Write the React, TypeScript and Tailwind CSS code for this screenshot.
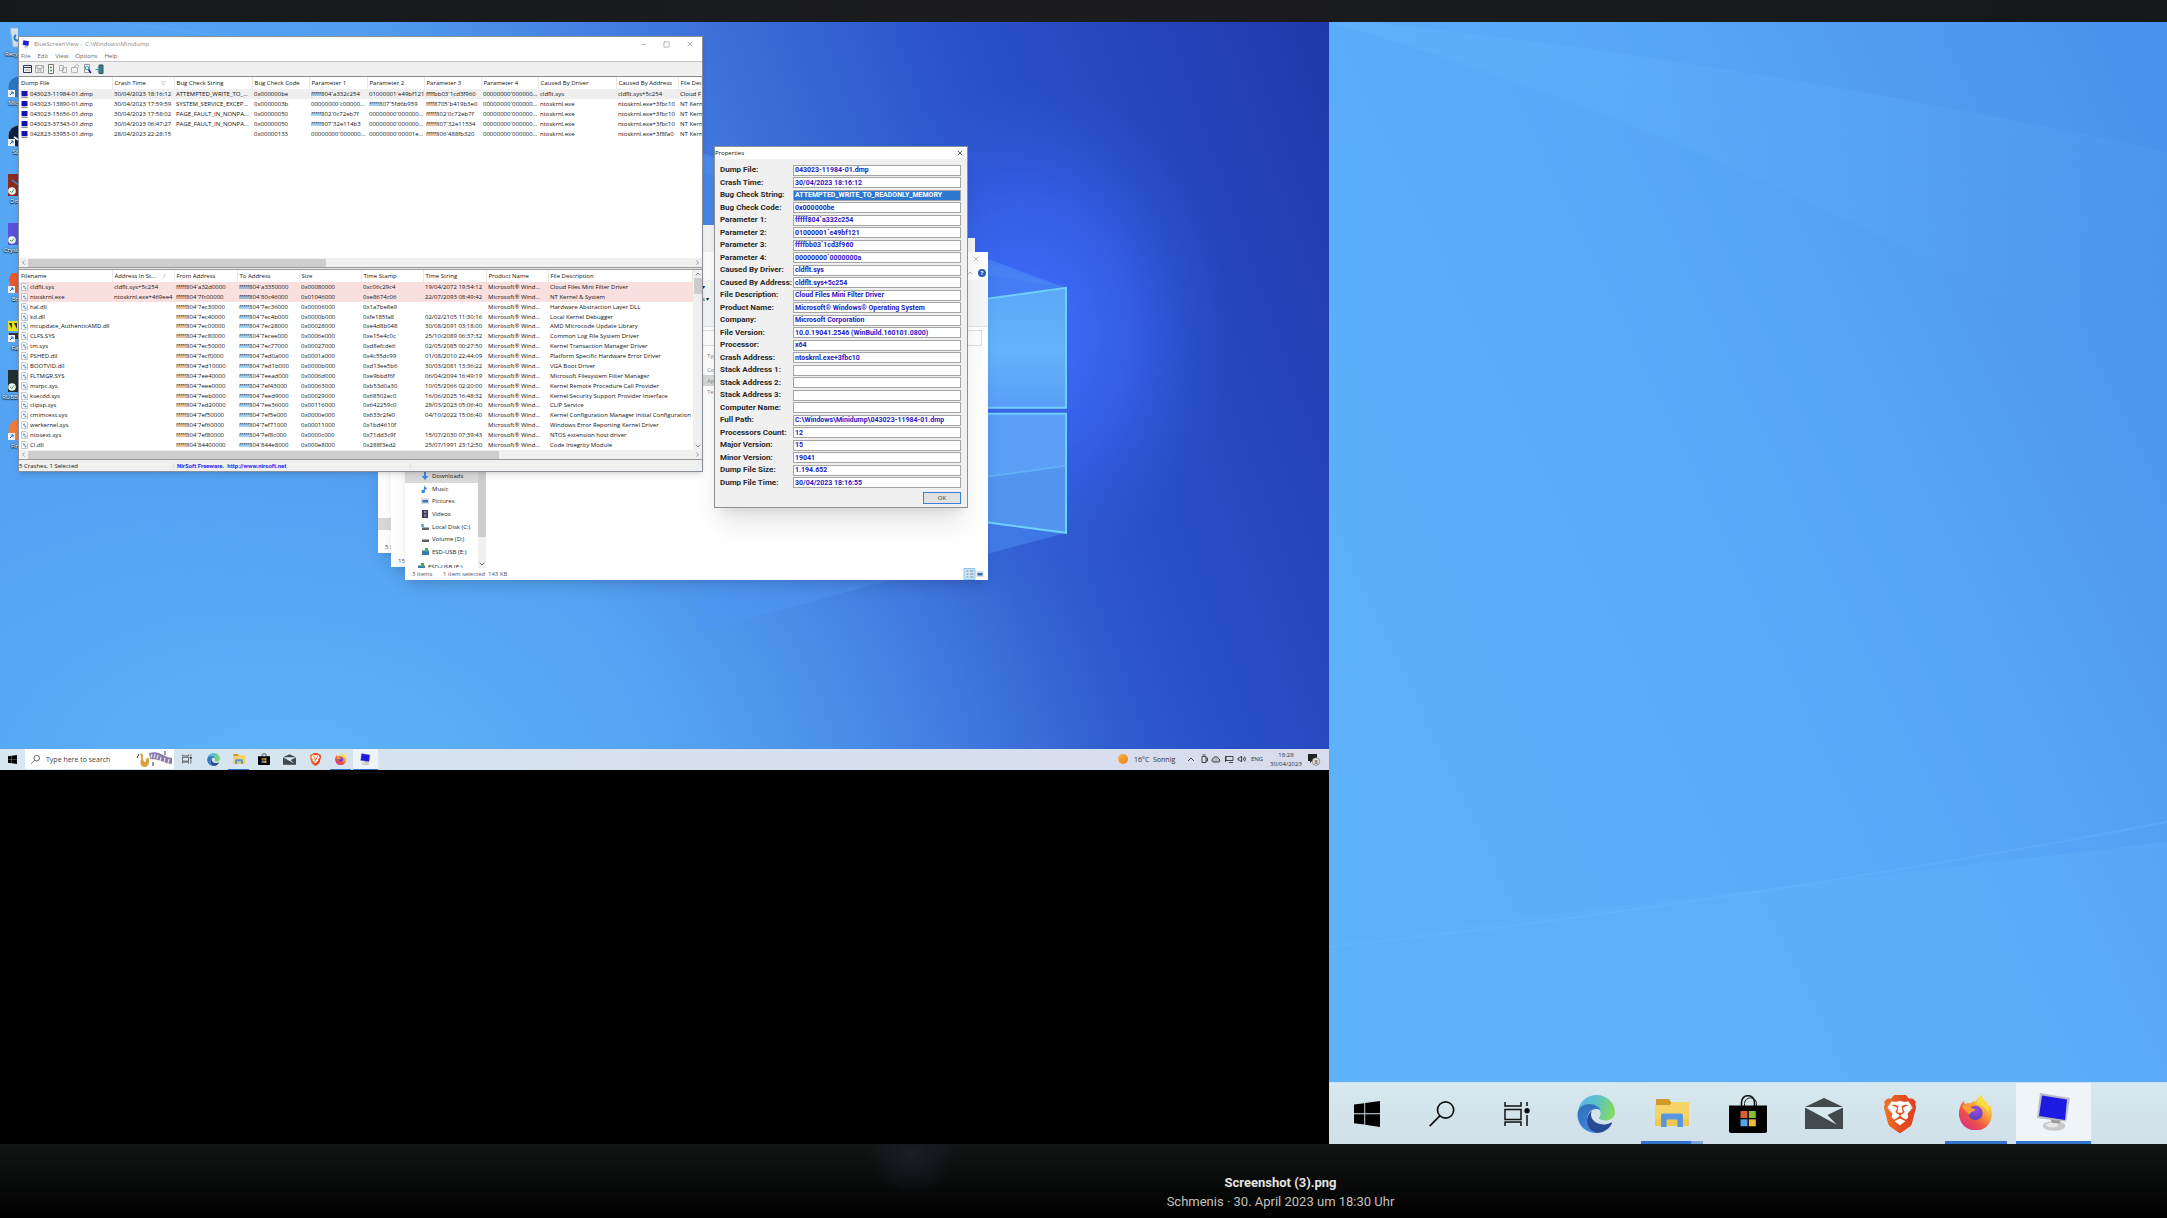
import { useId } from "react";
import { SiBrave } from "react-icons/si";
import { LuMinus, LuSquare, LuX, LuChevronUp, LuChevronDown } from "react-icons/lu";

interface IconProps {
  className?: string;
}

interface Column {
  label: string;
  width: string;
  sort?: string;
}

const CRASH_COLUMNS: Column[] = [
  { label: "Dump File", width: "w-[93px]" },
  { label: "Crash Time", width: "w-[62px]", sort: "▽" },
  { label: "Bug Check String", width: "w-[78px]" },
  { label: "Bug Check Code", width: "w-[57px]" },
  { label: "Parameter 1", width: "w-[58px]" },
  { label: "Parameter 2", width: "w-[57px]" },
  { label: "Parameter 3", width: "w-[57px]" },
  { label: "Parameter 4", width: "w-[57px]" },
  { label: "Caused By Driver", width: "w-[78px]" },
  { label: "Caused By Address", width: "w-[62px]" },
  { label: "File Des", width: "w-auto" },
];

const CRASHES = [
  ["043023-11984-01.dmp", "30/04/2023 18:16:12", "ATTEMPTED_WRITE_TO_...", "0x000000be", "fffff804`a332c254", "01000001`e49bf121", "ffffbb03`1cd3f960", "00000000`000000...", "cldflt.sys", "cldflt.sys+5c254", "Cloud F"],
  ["043023-13890-01.dmp", "30/04/2023 17:59:59", "SYSTEM_SERVICE_EXCEP...", "0x0000003b", "00000000`c00000...", "fffff807`5fd6b959", "ffff8705`b419b3e0", "00000000`000000...", "ntoskrnl.exe", "ntoskrnl.exe+3fbc10", "NT Kern"],
  ["043023-15656-01.dmp", "30/04/2023 17:58:02", "PAGE_FAULT_IN_NONPA...", "0x00000050", "fffff802`0c72eb7f", "00000000`000000...", "fffff802`0c72eb7f", "00000000`000000...", "ntoskrnl.exe", "ntoskrnl.exe+3fbc10", "NT Kern"],
  ["043023-37343-01.dmp", "30/04/2023 06:47:27", "PAGE_FAULT_IN_NONPA...", "0x00000050", "fffff807`32e114b3", "00000000`000000...", "fffff807`32e11534", "00000000`000000...", "ntoskrnl.exe", "ntoskrnl.exe+3fbc10", "NT Kern"],
  ["042823-33953-01.dmp", "28/04/2023 22:28:15", "", "0x00000133", "00000000`000000...", "00000000`00001e...", "fffff806`488fb320", "00000000`000000...", "ntoskrnl.exe", "ntoskrnl.exe+3f8fa0", "NT Kern"],
];

const DRIVER_COLUMNS: Column[] = [
  { label: "Filename", width: "w-[93px]" },
  { label: "Address In St...", width: "w-[62px]", sort: "∕" },
  { label: "From Address", width: "w-[63px]" },
  { label: "To Address", width: "w-[62px]" },
  { label: "Size", width: "w-[62px]" },
  { label: "Time Stamp", width: "w-[62px]" },
  { label: "Time String", width: "w-[63px]" },
  { label: "Product Name", width: "w-[62px]" },
  { label: "File Description", width: "w-auto" },
];

const WIND = "Microsoft® Wind...";

const DRIVERS = [
  ["cldflt.sys", "cldflt.sys+5c254", "fffff804`a32d0000", "fffff804`a3350000", "0x00080000", "0xc06c29c4", "19/04/2072 19:54:12", WIND, "Cloud Files Mini Filter Driver"],
  ["ntoskrnl.exe", "ntoskrnl.exe+469ee4", "fffff804`7fc00000", "fffff804`80c46000", "0x01046000", "0xe8674c06", "22/07/2093 08:49:42", WIND, "NT Kernel & System"],
  ["hal.dll", "", "fffff804`7ec30000", "fffff804`7ec36000", "0x00006000", "0x1a7be8e9", "", WIND, "Hardware Abstraction Layer DLL"],
  ["kd.dll", "", "fffff804`7ec40000", "fffff804`7ec4b000", "0x0000b000", "0xfe185fa8", "02/02/2105 11:30:16", WIND, "Local Kernel Debugger"],
  ["mcupdate_AuthenticAMD.dll", "", "fffff804`7ec00000", "fffff804`7ec28000", "0x00028000", "0xe4d8b048", "30/08/2091 03:18:00", WIND, "AMD Microcode Update Library"],
  ["CLFS.SYS", "", "fffff804`7ec80000", "fffff804`7ecee000", "0x0006e000", "0xe15e4c0c", "25/10/2089 06:37:32", WIND, "Common Log File System Driver"],
  ["tm.sys", "", "fffff804`7ec50000", "fffff804`7ec77000", "0x00027000", "0xd8efcde6", "02/05/2085 00:27:50", WIND, "Kernel Transaction Manager Driver"],
  ["PSHED.dll", "", "fffff804`7ecf0000", "fffff804`7ed0a000", "0x0001a000", "0x4c55dc99", "01/08/2010 22:44:09", WIND, "Platform Specific Hardware Error Driver"],
  ["BOOTVID.dll", "", "fffff804`7ed10000", "fffff804`7ed1b000", "0x0000b000", "0xd13ee5b6", "30/03/2081 13:36:22", WIND, "VGA Boot Driver"],
  ["FLTMGR.SYS", "", "fffff804`7ee40000", "fffff804`7eead000", "0x0006d000", "0xe9bbdf6f", "06/04/2094 16:49:19", WIND, "Microsoft Filesystem Filter Manager"],
  ["msrpc.sys", "", "fffff804`7eee0000", "fffff804`7ef43000", "0x00063000", "0xb53d0a30", "10/05/2066 02:20:00", WIND, "Kernel Remote Procedure Call Provider"],
  ["ksecdd.sys", "", "fffff804`7eeb0000", "fffff804`7eed9000", "0x00029000", "0x68502ec0", "16/06/2025 16:48:32", WIND, "Kernel Security Support Provider Interface"],
  ["clipsp.sys", "", "fffff804`7ed20000", "fffff804`7ee36000", "0x00116000", "0x642259c0", "28/03/2023 05:06:40", WIND, "CLIP Service"],
  ["cmimcext.sys", "", "fffff804`7ef50000", "fffff804`7ef5e000", "0x0000e000", "0x633c2fe0", "04/10/2022 15:06:40", WIND, "Kernel Configuration Manager Initial Configuration I"],
  ["werkernel.sys", "", "fffff804`7ef60000", "fffff804`7ef71000", "0x00011000", "0x1bd4610f", "", WIND, "Windows Error Reporting Kernel Driver"],
  ["ntosext.sys", "", "fffff804`7ef80000", "fffff804`7ef8c000", "0x0000c000", "0x71dd3c9f", "15/07/2030 07:39:43", WIND, "NTOS extension host driver"],
  ["CI.dll", "", "fffff804`84400000", "fffff804`844e8000", "0x000e8000", "0x288f3ed2", "25/07/1991 23:12:50", WIND, "Code Integrity Module"],
];

const PROPERTIES = [
  ["Dump File:", "043023-11984-01.dmp"],
  ["Crash Time:", "30/04/2023 18:16:12"],
  ["Bug Check String:", "ATTEMPTED_WRITE_TO_READONLY_MEMORY"],
  ["Bug Check Code:", "0x000000be"],
  ["Parameter 1:", "fffff804`a332c254"],
  ["Parameter 2:", "01000001`e49bf121"],
  ["Parameter 3:", "ffffbb03`1cd3f960"],
  ["Parameter 4:", "00000000`0000000a"],
  ["Caused By Driver:", "cldflt.sys"],
  ["Caused By Address:", "cldflt.sys+5c254"],
  ["File Description:", "Cloud Files Mini Filter Driver"],
  ["Product Name:", "Microsoft® Windows® Operating System"],
  ["Company:", "Microsoft Corporation"],
  ["File Version:", "10.0.19041.2546 (WinBuild.160101.0800)"],
  ["Processor:", "x64"],
  ["Crash Address:", "ntoskrnl.exe+3fbc10"],
  ["Stack Address 1:", ""],
  ["Stack Address 2:", ""],
  ["Stack Address 3:", ""],
  ["Computer Name:", ""],
  ["Full Path:", "C:\\Windows\\Minidump\\043023-11984-01.dmp"],
  ["Processors Count:", "12"],
  ["Major Version:", "15"],
  ["Minor Version:", "19041"],
  ["Dump File Size:", "1.194.652"],
  ["Dump File Time:", "30/04/2023 18:16:55"],
];

/* ---------- icons ---------- */

const StartIcon = ({ className }: IconProps) => (
  <svg viewBox="0 0 26 26" className={className}>
    <path d="M0 3.6 10.3 2.2V12.3H0zM11.2 2 26 0v12.3H11.2zM0 13.3h10.3v10.2L0 22.2zM11.2 13.3H26V26l-14.8-2.2z" fill="#000" />
  </svg>
);

const SearchIcon = ({ className }: IconProps) => (
  <svg viewBox="0 0 26 26" className={className} fill="none" stroke="#111" strokeWidth="1.7">
    <circle cx="16.6" cy="9" r="8.1" />
    <path d="M10.8 14.8.7 25.2" />
  </svg>
);

const TaskViewIcon = ({ className }: IconProps) => (
  <svg viewBox="0 0 26 26" className={className} fill="none" stroke="#111" strokeWidth="1.5">
    <path d="M1 1v4h16V1M1 8.5h16v10H1zM1 25v-4h16v4M23 1v4M23 14v11" />
    <circle cx="23" cy="9.8" r="2" fill="#000" />
  </svg>
);

const EdgeIcon = ({ className }: IconProps) => {
  const id = useId();
  return (
    <svg viewBox="0 0 38 38" className={className}>
      <defs>
        <linearGradient id={`${id}a`} x1="0" y1="0.3" x2="1" y2="0.5">
          <stop offset="0" stopColor="#5cb4f2" />
          <stop offset="0.5" stopColor="#5cc3c4" />
          <stop offset="1" stopColor="#84dc5c" />
        </linearGradient>
        <linearGradient id={`${id}b`} x1="0" y1="0" x2="0.4" y2="1">
          <stop offset="0" stopColor="#2f6fb8" />
          <stop offset="1" stopColor="#3f85dc" />
        </linearGradient>
      </defs>
      <path d="M1 16C2.500 6.500 10 0 19.500 0 30 0 38 8 38 17c0 5-4 8.400-9 8.400-4 0-7-1-7-2.400 0-1 1.600-2 1.600-4.500C23.600 13 18 9.500 12 9.500 7 9.500 3 12 1 16z" fill={`url(#${id}a)`} />
      <path d="M.6 18C1.500 12 7 9 12.500 9c6 0 11 3.500 11 6.500-1-1-2.500-1.500-4-1.500C13 14 10 19.500 10 25c0 6 4 11 9.500 13C9 38-.5 30 .6 18z" fill={`url(#${id}b)`} />
      <path d="M15.500 15.500C11.500 18 10 22 10 26c0 6 4.500 11 10 12 7-.2 12.500-4.500 15-9.500.4-.9-.3-1.300-1.200-.8C26 32 14 28 14 19.500c0-1.600.6-3 1.500-4z" fill="#264b94" />
    </svg>
  );
};

const FolderIcon = ({ className }: IconProps) => (
  <svg viewBox="0 0 34 28" className={className}>
    <path d="M1 0h12.500L16 2.500V6H1z" fill="#cf9a2b" />
    <path d="M0 6h15l2-3h16a1 1 0 0 1 1 1v22a1 1 0 0 1-1 1H1a1 1 0 0 1-1-1z" fill="#f5d467" />
    <path d="M0 20h34v6a1 1 0 0 1-1 1H1a1 1 0 0 1-1-1z" fill="#f0c84f" />
    <path d="M6 16.500a2 2 0 0 1 2-2h18a2 2 0 0 1 2 2V28h-5.500v-7.500h-11V28H6z" fill="#5697df" />
  </svg>
);

const StoreIcon = ({ className }: IconProps) => (
  <svg viewBox="0 0 38 38" className={className}>
    <path d="M12.500 11V7.500c0-9 13-9 13 0V11" fill="none" stroke="#111" strokeWidth="1.600" />
    <path d="M15.500 11V8.500c0-7.500 12-7.500 12 0V11" fill="none" stroke="#222" strokeWidth="1" />
    <path d="M0 10.500h38V36a2 2 0 0 1-2 2H2a2 2 0 0 1-2-2z" fill="#000" />
    <path d="M11.500 16h7v7h-7z" fill="#dd5d34" />
    <path d="M19.800 16h7v7h-7z" fill="#8db832" />
    <path d="M11.500 24.300h7v7h-7z" fill="#55a5ee" />
    <path d="M19.800 24.300h7v7h-7z" fill="#f0b93a" />
  </svg>
);

const MailIcon = ({ className }: IconProps) => (
  <svg viewBox="0 0 38 31" className={className}>
    <path d="M0 9 19 0l19 9z" fill="#42494d" />
    <path d="M0 10h38v21H0z" fill="#42494d" />
    <path d="M1 10h36L22.500 17l9 9.500z" fill="#d8e8ef" />
  </svg>
);

const BraveIcon = ({ className }: IconProps) => {
  const id = useId();
  return (
    <svg viewBox="0 0 32 38" className={className}>
      <defs>
        <linearGradient id={id} x1="0" y1="0" x2="1" y2="0">
          <stop offset="0" stopColor="#ee7628" />
          <stop offset="0.550" stopColor="#e64b21" />
          <stop offset="1" stopColor="#e23f20" />
        </linearGradient>
      </defs>
      <path d="M6 7h20v18l-10 8-10-8z" fill="#fff" />
      <SiBrave x="-3" y="0" size={38} fill={`url(#${id})`} />
    </svg>
  );
};

const FirefoxIcon = ({ className }: IconProps) => {
  const id = useId();
  return (
    <svg viewBox="0 0 34 35" className={className}>
      <defs>
        <linearGradient id={`${id}a`} x1="0.850" y1="0.100" x2="0.200" y2="0.950">
          <stop offset="0" stopColor="#fdea45" />
          <stop offset="0.350" stopColor="#f9a43a" />
          <stop offset="0.650" stopColor="#ef5546" />
          <stop offset="1" stopColor="#d9307e" />
        </linearGradient>
        <radialGradient id={`${id}b`} cx="0.600" cy="0.250" r="0.800">
          <stop offset="0" stopColor="#9a48e8" />
          <stop offset="1" stopColor="#5544b4" />
        </radialGradient>
      </defs>
      <path d="M22 0c1 3 3 5 5 7 1.500 1.500 2.500 3 3 5l1-2c3 6 2.500 14-1.500 19.500-6 7.500-18 8-25 1C-1 24-1 16 1.500 11 2 8.500 3.500 7 5 5.500c0 1.500.3 2.500 1 3.500C8 8 9.500 8 11.500 8.500 13 6 15 7 17 6c1-2.500 3-4 5-6z" fill={`url(#${id}a)`} />
      <circle cx="16.500" cy="18" r="7.200" fill={`url(#${id}b)`} />
      <path d="M3 12c2-2 4-3.500 8-3.500-.5 1.500 0 3 1 4.500 2.200.3 4 1 4.500 2-1 1.300-3 1.500-4.500 2.500-1 .7-1 1.500-1.500 2.500L8 17z" fill="#f6a033" />
      <path d="M17 9.500c1-4 3.500-5.500 5-9.500 1 3 3 5 5 7 2.500 3 3.500 6 2 10.500-2-5-6-8-12-8z" fill="#fbdc41" />
    </svg>
  );
};

const MonitorIcon = ({ className }: IconProps) => (
  <svg viewBox="0 0 34 38" className={className}>
    <ellipse cx="17" cy="33" rx="11.500" ry="4.800" fill="#c9c9c9" />
    <ellipse cx="15" cy="32" rx="6" ry="2.500" fill="#e6e6e6" />
    <path d="M13 25h11l-1 5h-8z" fill="#9b9b9b" />
    <path d="M3 0 33 5l-4 23.500L0 25z" fill="#b9bcc2" />
    <path d="M5 2.500 30 6.500l-2 20.500L2 23z" fill="#1d1ae2" />
  </svg>
);

const DumpIcon = () => (
  <svg viewBox="0 0 7 7" className="size-[7px] shrink-0">
    <path d="M.5 0h6v5h-6z" fill="#1412b4" />
    <path d="M1 5.500h5L7 7H0z" fill="#8a9098" />
  </svg>
);

const DllIcon = () => (
  <svg viewBox="0 0 7 8" className="h-2 w-[7px] shrink-0">
    <path d="M.5.5h4.500l1.500 1.500v5.500h-6z" fill="#fff" stroke="#a9b0b8" strokeWidth="0.700" />
    <circle cx="3" cy="3.500" r="1.100" fill="#5e92cc" />
    <circle cx="4.500" cy="5.500" r="1.100" fill="#6c9ed2" />
  </svg>
);

/* ---------- wallpaper ---------- */

function LeftWallpaper() {
  return (
    <svg viewBox="0 0 1329 748" preserveAspectRatio="xMidYMid slice" className="absolute inset-0 h-full w-full">
      <defs>
        <linearGradient id="wl" x1="0" y1="0.2" x2="1" y2="0">
          <stop offset="0" stopColor="#55a7f4" />
          <stop offset="0.3" stopColor="#529df0" />
          <stop offset="0.52" stopColor="#3f76dc" />
          <stop offset="0.72" stopColor="#2a52ca" />
          <stop offset="1" stopColor="#2038ac" />
        </linearGradient>
        <radialGradient id="wb" cx="0.22" cy="1" r="0.62">
          <stop offset="0" stopColor="#5eb4fa" />
          <stop offset="0.5" stopColor="#56a6f4" stopOpacity="0.7" />
          <stop offset="1" stopColor="#4a8cec" stopOpacity="0" />
        </radialGradient>
        <radialGradient id="wg" cx="0.5" cy="0.5" r="0.5">
          <stop offset="0" stopColor="#3f70ff" />
          <stop offset="0.5" stopColor="#3a66f6" stopOpacity="0.65" />
          <stop offset="1" stopColor="#2f58dc" stopOpacity="0" />
        </radialGradient>
        <linearGradient id="wp" x1="0" y1="0" x2="0" y2="1">
          <stop offset="0" stopColor="#5aa8f8" />
          <stop offset="0.5" stopColor="#64b4fb" />
          <stop offset="1" stopColor="#5a9ef8" />
        </linearGradient>
      </defs>
      <path d="M0 0h1329v748H0z" fill="url(#wl)" />
      <path d="M0 0h1329v748H0z" fill="url(#wb)" />
      <ellipse cx="1030" cy="310" rx="200" ry="250" fill="url(#wg)" />
      <path d="M0 0h110q260 20 610 140v70L1066 266 700 150Q400 30 100 0z" fill="#6db8ff" opacity="0.14" />
      <path d="M700 130 1066 266v245L700 610z" fill="#5096f6" opacity="0.45" />
      <path d="M900 289 1066 266v120H900z" fill="url(#wp)" />
      <path d="M900 392h166v119l-166-22z" fill="#5a9ef7" />
      <path d="M900 467 1066 444v67l-166-22z" fill="#5294ee" />
      <path d="M900 386h166v6H900z" fill="#3a66e6" />
      <path d="M900 289 1066 266v120H900M900 392h166v119l-166-22" fill="none" stroke="#6fd0fc" strokeWidth="2" />
      <path d="M900 467 1066 444" stroke="#68b8fa" strokeWidth="2" opacity="0.7" />
    </svg>
  );
}

function RightWallpaper() {
  return (
    <svg viewBox="0 0 838 1060" preserveAspectRatio="none" className="absolute inset-0 h-full w-full">
      <defs>
        <linearGradient id="wr" x1="0" y1="0.6" x2="1" y2="0">
          <stop offset="0" stopColor="#5cb1fa" />
          <stop offset="0.5" stopColor="#58a8f7" />
          <stop offset="1" stopColor="#4a8fec" />
        </linearGradient>
        <linearGradient id="wr2" x1="0" y1="0" x2="0.6" y2="1">
          <stop offset="0" stopColor="#6abcff" stopOpacity="0.25" />
          <stop offset="1" stopColor="#6abcff" stopOpacity="0" />
        </linearGradient>
      </defs>
      <path d="M0 0h838v1060H0z" fill="url(#wr)" />
      <path d="M40 0Q420 40 838 130v240Q420 120 0 0z" fill="url(#wr2)" />
      <path d="M838 820Q400 870 0 920v140h838z" fill="#62b6fb" opacity="0.3" />
      <path d="M0 925Q420 880 838 800" fill="none" stroke="#72c0ff" strokeWidth="2" opacity="0.25" />
    </svg>
  );
}

/* ---------- BlueScreenView ---------- */

interface ReportTableProps {
  columns: Column[];
  rows: string[][];
  kind: "crash" | "driver";
}

function ReportTable({ columns, rows, kind }: ReportTableProps) {
  const height = kind === "crash" ? "h-[62px]" : "h-[180px]";
  return (
    <table className={`w-full table-fixed border-collapse text-left leading-none ${height}`}>
      <thead>
        <tr className="h-3">
          {columns.map((c) => (
            <th key={c.label} className={`overflow-hidden border-r border-[#e8e8e8] p-0 pl-[2px] font-normal whitespace-nowrap ${c.width}`}>
              <span className={`flex justify-between ${c.sort ? "pr-2" : ""}`}>
                {c.label}
                {c.sort && <span className="text-[#999]">{c.sort}</span>}
              </span>
            </th>
          ))}
        </tr>
      </thead>
      <tbody>
        {rows.map((row, idx) => {
          const tone =
            kind === "crash" ? (idx === 0 ? "bg-[#efefef]" : "") : idx < 2 ? "bg-[#f9e0df]" : "";
          return (
            <tr key={row[0]} className={tone}>
              {row.map((cell, i) => (
                <td key={columns[i].label} className="overflow-hidden p-0 pl-[2px] whitespace-nowrap">
                  {i === 0 ? (
                    <span className="flex items-center gap-[2px]">
                      {kind === "crash" ? <DumpIcon /> : <DllIcon />}
                      {cell}
                    </span>
                  ) : (
                    cell
                  )}
                </td>
              ))}
            </tr>
          );
        })}
      </tbody>
    </table>
  );
}

function HScroll({ thumb }: { thumb: string }) {
  return (
    <div className="flex h-[9px] items-center bg-[#f0f0f0] text-[#555]">
      <LuChevronUp className="size-[9px] -rotate-90 p-px" />
      <div className={`h-2 bg-[#cdcdcd] ${thumb}`} />
      <LuChevronUp className="ml-auto size-[9px] rotate-90 p-px" />
    </div>
  );
}

function Toolbar() {
  return (
    <svg viewBox="0 0 86 10" className="h-[10px] w-[86px]" fill="none" stroke="#555" strokeWidth="1">
      <path d="M.5 1.500h8v7h-8zM.5 3.500h8" stroke="#333a55" />
      <path d="M2 6h5" stroke="#9aa" />
      <path d="M12.500 1.500h8v7h-8zM14 1.500v3h5v-3M15 8V6h3v2" stroke="#aaa" />
      <path d="M25.500.5h5v9h-5z" fill="#fff" stroke="#777" />
      <path d="M27 3.500h2M27 6.500h2" stroke="#3a9a4a" strokeWidth="1.500" />
      <path d="M36.500 1.500h4v5h-4zM39.500 3.500h4v5h-4z" stroke="#b5b5b5" />
      <path d="M48.500 3.500h6v5h-6zM51 3l3-2.500 2 1.500-2 2" stroke="#b5b5b5" />
      <path d="M61.500.5h5v8h-5z" fill="#fff" stroke="#999" />
      <circle cx="64" cy="4" r="1.800" stroke="#2aa0c8" />
      <path d="M65.500 5.500 68 9" stroke="#1420a0" strokeWidth="1.500" />
      <path d="M76 1h4v8.500h-4z" fill="#3b7f86" stroke="#3a5560" />
      <path d="M72.500 5.500h4M75 3.500l2 2-2 2" stroke="#2aa0a8" />
    </svg>
  );
}

function BlueScreenView() {
  return (
    <section className="absolute top-[14px] left-[18px] flex w-[685px] flex-col border border-[#8a8f98] bg-white text-[6px] leading-none text-[#111] shadow-md">
      <header className="flex h-[14px] items-center text-[#8a8a8a]">
        <MonitorIcon className="mr-1 ml-[3px] h-2 w-2" />
        <h1>BlueScreenView - &nbsp;C:\Windows\Minidump</h1>
        <div className="ml-auto flex gap-4 pr-2">
          <button type="button" aria-label="Minimise"><LuMinus className="size-[7px]" /></button>
          <button type="button" aria-label="Maximise"><LuSquare className="size-[7px]" /></button>
          <button type="button" aria-label="Close"><LuX className="size-2" /></button>
        </div>
      </header>
      <nav className="flex h-[11px] items-center gap-[7px] border-b border-[#c4c4c4] pl-[2px] text-[#666]">
        {["File", "Edit", "View", "Options", "Help"].map((m) => (
          <button key={m} type="button">{m}</button>
        ))}
      </nav>
      <div className="flex h-[15px] items-center border-b border-[#8c8c8c] bg-[#f0f0f0] pl-1">
        <Toolbar />
      </div>
      <div className="h-[181px]">
        <ReportTable columns={CRASH_COLUMNS} rows={CRASHES} kind="crash" />
      </div>
      <HScroll thumb="w-[298px]" />
      <div className="h-[3px] border-y border-[#9a9a9a] bg-[#e6e6e6]" />
      <div className="flex">
        <div className="min-w-0 flex-1">
          <ReportTable columns={DRIVER_COLUMNS} rows={DRIVERS} kind="driver" />
        </div>
        <div className="flex w-[9px] flex-col items-center bg-[#f0f0f0] text-[#555]">
          <LuChevronUp className="size-2" />
          <div className="h-4 w-2 bg-[#cdcdcd]" />
          <LuChevronDown className="mt-auto size-2" />
        </div>
      </div>
      <HScroll thumb="w-[471px]" />
      <footer className="flex h-3 items-center border-t border-[#999] bg-[#f0f0f0]">
        <span className="w-[155px] border-r border-[#ddd]">5 Crashes, 1 Selected</span>
        <a href="http://www.nirsoft.net" className="w-[237px] border-r border-[#ddd] pl-[3px] font-['Roboto'] font-bold whitespace-pre text-[#2a2af0]">
          NirSoft Freeware.  http://www.nirsoft.net
        </a>
      </footer>
    </section>
  );
}

/* ---------- properties dialog ---------- */

function PropertiesDialog() {
  return (
    <section className="absolute top-[124px] left-[714px] w-[254px] border border-[#8a8f98] bg-[#f0f0f0] shadow-xl">
      <header className="flex h-3 items-center justify-between bg-white pr-[3px] text-[6px] leading-none text-[#111]">
        <h2>Properties</h2>
        <button type="button" aria-label="Close"><LuX className="size-2" /></button>
      </header>
      <div className="mt-[5px] grid h-[325px] auto-rows-fr pr-[6px] pl-[5px] font-['Roboto'] leading-none font-bold">
        {PROPERTIES.map(([label, value], idx) => (
          <div key={label} className="flex items-center">
            <label htmlFor={`prop-${idx}`} className="w-[73px] shrink-0 text-[8px] whitespace-nowrap text-[#2a2a2a]">
              {label}
            </label>
            <input
              id={`prop-${idx}`}
              readOnly
              value={value}
              className={`h-[11px] min-w-0 flex-1 border border-[#a5a5a5] px-px text-[7px] ${
                idx === 2 ? "bg-[#2f78d2] text-white" : "bg-white text-[#2320c4]"
              }`}
            />
          </div>
        ))}
      </div>
      <div className="flex justify-end px-[6px] pt-[3px] pb-[3px]">
        <button type="button" className="h-3 w-[38px] border border-[#3a80d8] bg-[#e1e1e1] text-[6px] leading-none text-[#333]">
          OK
        </button>
      </div>
    </section>
  );
}

/* ---------- explorer windows ---------- */

const TREE = [
  {
    label: "Downloads",
    icon: <path d="M3 0h2v4h2.500L4 8 .5 4H3z" fill="#3f8ae0" />,
  },
  {
    label: "Music",
    icon: <path d="M3 0q0 2 3 3-.5 2-2 1.500V6A1.800 1.800 0 1 1 3 4.700z" fill="#3f8ae0" />,
  },
  {
    label: "Pictures",
    icon: (
      <>
        <path d="M0 1h8v6H0z" fill="#d8dde2" />
        <path d="M1.500 3h5.500v2.500H1.500z" fill="#3a74b8" />
      </>
    ),
  },
  {
    label: "Videos",
    icon: (
      <>
        <path d="M1 0h6v8H1z" fill="#3c3c4c" />
        <path d="M3 1h2.500v2H3zM3 4.500h2.500v2H3z" fill="#8c8ac0" />
      </>
    ),
  },
  {
    label: "Local Disk (C:)",
    icon: (
      <>
        <path d="M0 1h3v3H0z" fill="#52b4ee" />
        <path d="M1 4.500h7v2.500H1z" fill="#5f6468" />
      </>
    ),
  },
  {
    label: "Volume (D:)",
    icon: <path d="M1 4.500h7v2.500H1z" fill="#5a5f63" />,
  },
  {
    label: "ESD-USB (E:)",
    icon: (
      <>
        <path d="M1 2.500h7v4.500H1z" fill="#3a78b0" />
        <path d="M4 0h3v4H4z" fill="#4fa84f" />
      </>
    ),
  },
];

const FILE_TYPES = ["Compressed", "Application", "Text Docu"];

function Explorer() {
  return (
    <section className="absolute top-[230px] left-[405px] flex h-[328px] w-[583px] flex-col bg-white text-[6px] leading-none text-[#222] shadow-lg">
      <header className="flex h-[14px] items-center justify-end pr-2 text-[#999]">
        <button type="button" aria-label="Close"><LuX className="size-2" /></button>
      </header>
      <div className="flex h-[14px] items-center justify-end gap-1 pr-[2px]">
        <LuChevronUp className="size-2 text-[#999]" />
        <span className="flex size-2 items-center justify-center rounded-full bg-[#2660b4] font-bold text-white">?</span>
      </div>
      <div className="flex h-[47px] flex-col gap-[6px] border-b border-[#e2e2e2] bg-[#f5f6f7] pt-1 pl-[297px]">
        <span>▾</span>
        <span>s ▾</span>
      </div>
      <div className="mx-[6px] mt-[3px] h-4 border border-[#ddd]" />
      <div className="mt-[3px] flex min-h-0 flex-1">
        <nav className="w-[73px] overflow-hidden pt-[121px]">
          <ul className="grid h-[88px] auto-rows-fr">
            {TREE.map((item) => (
              <li key={item.label} className={`flex items-center gap-[3px] pl-4 whitespace-nowrap ${item.label === "Downloads" ? "bg-[#d9d9d9]" : ""}`}>
                <svg viewBox="0 0 8 8" className="size-2 shrink-0">{item.icon}</svg>
                {item.label}
              </li>
            ))}
          </ul>
          <p className="flex items-center gap-[3px] pt-[5px] pl-3">
            <svg viewBox="0 0 8 8" className="size-2">{TREE[6].icon}</svg>
            ESD-USB (E:)
          </p>
        </nav>
        <div className="flex w-2 flex-col items-center bg-[#f0f0f0]">
          <div className="h-[188px] w-2 bg-[#cdcdcd]" />
          <LuChevronDown className="mt-auto size-2" />
        </div>
        <div className="flex-1 pl-[214px] text-[#888]">
          <p className="pt-1 pb-[5px] pl-[7px]">Type</p>
          {FILE_TYPES.map((t) => (
            <p key={t} className={`flex h-[11px] w-[60px] items-center pl-[7px] ${t === "Application" ? "bg-[#d9d9d9]" : ""}`}>
              {t}
            </p>
          ))}
        </div>
      </div>
      <footer className="flex h-3 items-center pl-[7px] text-[#44546e]">
        <span className="w-[31px]">3 items</span>
        <span className="w-[45px]">1 item selected</span>
        <span>143 KB</span>
        <svg viewBox="0 0 24 12" className="ml-auto h-3 w-[25px]">
          <path d="M.5.5h11v11H.5z" fill="#cde8f8" stroke="#8cc4ea" />
          <path d="M3 3h2M6.500 3H10M3 6h2M6.500 6H10M3 9h2M6.500 9H10" stroke="#7a8790" />
          <path d="M13 3h7v6h-7z" fill="#d5dde4" />
          <path d="M14 5h5v2.500h-5z" fill="#2f6cb4" />
        </svg>
      </footer>
    </section>
  );
}

/* ---------- desktop shortcuts ---------- */

const SHORTCUTS = [
  { label: "Recy", icon: <path d="M2 1h18l-3 19H5z" fill="#cfe0ec" stroke="#8fb2cc" /> },
  { label: "Mic", icon: <circle cx="11" cy="11" r="10.500" fill="#2a74c0" /> },
  { label: "St", icon: <circle cx="11" cy="11" r="10.500" fill="#10203e" /> },
  { label: "Do", icon: <path d="M0 0h22v22H0z" fill="#8c2a20" /> },
  { label: "Cryst", icon: <path d="M0 0h22v22H0z" fill="#5a52d8" /> },
  { label: "Br", icon: <path d="M4 1h14l3 5-2 12-8 4-8-4L1 6z" fill="#e8582a" /> },
  { label: "Fa", icon: <path d="M0 0h22v10H0z" fill="#e6e020" /> },
  { label: "RUBB", icon: <path d="M0 0h22v22H0z" fill="#20302c" /> },
  { label: "Fir", icon: <circle cx="11" cy="11" r="10.500" fill="#f07838" /> },
];

function Shortcuts() {
  return (
    <ul className="absolute top-[5px] left-0 w-[18px] overflow-hidden">
      {SHORTCUTS.map((s, idx) => {
        const synced = s.label === "Do" || s.label === "Cryst" || s.label === "RUBB";
        return (
          <li key={s.label} className="flex h-[49px] flex-col">
            <svg viewBox="0 0 22 22" className="ml-2 size-[22px]">
              {s.icon}
              {s.label === "Recy" && <path d="M8 8a3 3 0 1 0 4 1" fill="none" stroke="#2a78c8" strokeWidth="2" />}
              {s.label === "St" && <path d="M6 12l6 4 5-2" stroke="#e8eef4" strokeWidth="2" fill="none" />}
              {s.label === "Do" && <path d="M4 6l12 9" stroke="#3a8ad0" strokeWidth="1.500" />}
              {s.label === "Fa" && <path d="M1 2h3v6M6 2h3v6M1 12h20v6H1z" fill="#333" />}
              {synced && (
                <>
                  <circle cx="4" cy="17" r="3.800" fill="#f2f6f2" />
                  <path d="M2.200 17l1.500 1.500 2.300-3" stroke="#3a9a4a" fill="none" />
                </>
              )}
              {!synced && idx > 0 && (
                <>
                  <path d="M0 14h7v7H0z" fill="#f4f4f4" />
                  <path d="M2 19l3-3M2.800 16H5v2.200" stroke="#2468b8" fill="none" />
                </>
              )}
            </svg>
            <span className="flex justify-end pt-[2px] text-[6px] leading-none text-white [text-shadow:0_0_2px_#000,0_1px_1px_#000]">
              {s.label}
            </span>
          </li>
        );
      })}
    </ul>
  );
}

/* ---------- taskbars ---------- */

function SearchHighlight() {
  return (
    <svg viewBox="0 0 38 18" className="ml-auto h-[18px] w-[38px]">
      <path d="M4 4q3-1.500 3 2-.5 5 1.500 6 2-.5 1.500-3l2.500-1.500q2 8-3 9.500-5.500 0-5-5.500Q6 7 4 4z" fill="#dca13c" />
      <path d="M13 3Q20 1 25 4t11 4v6q-7-1-11-3t-11-2z" fill="#8a7aa8" />
      <path d="M15 8l1-4M18 8l1-4M21 9l1-4M24 11l1-4M28 12l1-4M32 13l1-4" stroke="#e8e2f0" strokeWidth="1.200" />
      <path d="M1 8l2-4M29 1v4M17 12v4" stroke="#222" strokeWidth="0.900" />
    </svg>
  );
}

function LeftTaskbar() {
  return (
    <footer className="relative flex h-[21px] items-center bg-gradient-to-r from-[#d6e7f0] to-[#d8dcec] text-[7px] leading-none text-[#333]">
      <button type="button" aria-label="Start" className="flex w-[25px] justify-center"><StartIcon className="size-[9px]" /></button>
      <label className="flex h-5 w-[149px] items-center bg-white pl-[6px]">
        <SearchIcon className="mr-[6px] size-[9px] shrink-0" />
        <input type="text" placeholder="Type here to search" className="w-[82px] placeholder:text-[#444]" />
        <SearchHighlight />
      </label>
      <div className="flex h-full items-center">
        <button type="button" aria-label="Task view" className="flex w-[26px] justify-center"><TaskViewIcon className="size-[10px]" /></button>
        <button type="button" aria-label="Edge" className="flex w-[26px] justify-center"><EdgeIcon className="size-[13px]" /></button>
        <button type="button" aria-label="Explorer" className="flex h-full w-[25px] items-center justify-center px-[2px]">
          <span className="flex h-full w-full items-center justify-center border-b border-[#2f6fc8]"><FolderIcon className="h-[10px] w-3" /></span>
        </button>
        <button type="button" aria-label="Store" className="flex w-[26px] justify-center"><StoreIcon className="size-3" /></button>
        <button type="button" aria-label="Mail" className="flex w-[25px] justify-center"><MailIcon className="h-[11px] w-[13px]" /></button>
        <button type="button" aria-label="Brave" className="flex w-[26px] justify-center"><BraveIcon className="h-[13px] w-[11px]" /></button>
        <button type="button" aria-label="Firefox" className="flex h-full w-[25px] items-center justify-center px-[2px]">
          <span className="flex h-full w-full items-center justify-center border-b border-[#2f6fc8]"><FirefoxIcon className="size-3" /></span>
        </button>
        <button type="button" aria-label="BlueScreenView" className="flex h-full w-[25px] items-center justify-center border-b border-[#2f6fc8] bg-[#eef4f9]">
          <MonitorIcon className="h-3 w-[11px]" />
        </button>
      </div>
      <div className="ml-auto flex h-full items-center">
        <span className="mr-[6px] size-[10px] rounded-full bg-gradient-to-br from-[#f6b93c] to-[#ea7a22]" />
        <span className="w-[19px]">16°C</span>
        <span className="w-[34px]">Sonnig</span>
        <svg viewBox="0 0 60 10" className="mr-1 h-[10px] w-[60px]" fill="none" stroke="#333" strokeWidth="0.900">
          <path d="M1 7l3-3 3 3M15 2.500h4v6h-4zM15.500 1h3M19 4h1.500v3H19" />
          <path d="M26 8a2 2 0 0 1 0-3.500 3 3 0 0 1 5.500 0A2 2 0 0 1 32 8z" fill="#b8bcc4" />
          <path d="M39 2.500h7v4h-7zM42 8.500h4M38.500 2v6" />
          <path d="M51 4h1.500l2-2v6l-2-2H51zM56 3.500q1 1.500 0 3M57.500 2.500q2 2.500 0 5" />
        </svg>
        <span className="w-[18px] text-[6px]">ENG</span>
        <span className="grid w-[34px] gap-[3px] text-center text-[6px]">
          <span>18:28</span>
          <span>30/04/2023</span>
        </span>
        <span className="mr-2 ml-1 flex w-[14px] items-center">
          <svg viewBox="0 0 14 14" className="size-[14px]">
            <path d="M1 2h9v7H5L3 11V9H1z" fill="#222" />
            <circle cx="9" cy="9.500" r="3.800" fill="#ddd" stroke="#666" strokeWidth="0.600" />
            <text x="9" y="11.500" textAnchor="middle" fontSize="5.500" fill="#222">8</text>
          </svg>
        </span>
      </div>
    </footer>
  );
}

function RightTaskbar() {
  return (
    <footer className="relative flex h-[62px] items-center border-t border-[#c5e2f6] bg-gradient-to-b from-[#d7e8ef] to-[#d0dfe8]">
      <button type="button" aria-label="Start" className="flex w-[75px] justify-center"><StartIcon className="size-[26px]" /></button>
      <button type="button" aria-label="Search" className="flex w-[75px] justify-center"><SearchIcon className="size-[26px]" /></button>
      <button type="button" aria-label="Task view" className="mr-1 flex w-[75px] justify-center"><TaskViewIcon className="size-[26px]" /></button>
      <button type="button" aria-label="Edge" className="flex w-[76px] justify-center"><EdgeIcon className="size-[38px]" /></button>
      <button type="button" aria-label="Explorer" className="flex h-full w-[76px] flex-col items-center justify-end gap-[14px]">
        <FolderIcon className="h-7 w-[34px]" />
        <span className="flex h-[3px] w-[62px] border-r-[12px] border-[#7ba6dc] bg-[#3273cc]" />
      </button>
      <button type="button" aria-label="Store" className="flex w-[76px] justify-center"><StoreIcon className="size-[38px]" /></button>
      <button type="button" aria-label="Mail" className="flex w-[76px] justify-center"><MailIcon className="h-[31px] w-[38px]" /></button>
      <button type="button" aria-label="Brave" className="flex w-[76px] justify-center"><BraveIcon className="h-[38px] w-8" /></button>
      <button type="button" aria-label="Firefox" className="mr-[2px] flex h-full w-[76px] flex-col items-center justify-end gap-[11px]">
        <FirefoxIcon className="h-[35px] w-[34px]" />
        <span className="h-[3px] w-[62px] bg-[#3273cc]" />
      </button>
      <button type="button" aria-label="BlueScreenView" className="flex h-full w-[75px] items-center justify-center border-b-[3px] border-[#3273cc] bg-[#eff4f8]">
        <MonitorIcon className="h-[38px] w-[34px]" />
      </button>
    </footer>
  );
}

export default function App() {
  return (
    <div className="flex min-h-screen flex-col bg-black font-['Open_Sans',sans-serif]">
      <div className="h-[22px] bg-gradient-to-r from-[#16191a] via-[#1c1c1e] to-[#151819]" />
      <main className="grid flex-1 grid-cols-[1329fr_838fr]">
        <div className="bg-black">
          <div className="relative flex aspect-video flex-col overflow-hidden">
            <LeftWallpaper />
            <div className="flex-1">
              <Shortcuts />
              <section className="absolute top-[203px] left-[378px] flex h-[328px] w-[585px] flex-col bg-[#f5f5f5] text-[6px] leading-none text-[#44546e] shadow-lg">
                <div className="mt-[22px] flex-1 bg-white pt-[271px]">
                  <div className="h-3 bg-[#d9d9d9]" />
                </div>
                <footer className="flex h-3 items-center bg-white pl-[7px]">5 items</footer>
              </section>
              <section className="absolute top-[216px] left-[391px] flex h-[329px] w-[584px] flex-col bg-[#f5f5f5] text-[6px] leading-none text-[#44546e] shadow-lg">
                <div className="mt-[22px] flex-1 bg-white" />
                <footer className="flex h-3 items-center bg-white pl-[7px]">15 items</footer>
              </section>
              <Explorer />
              <BlueScreenView />
              <PropertiesDialog />
            </div>
            <LeftTaskbar />
          </div>
        </div>
        <div className="flex flex-col">
          <div className="relative flex-1"><RightWallpaper /></div>
          <RightTaskbar />
        </div>
      </main>
      <footer className="flex h-[74px] flex-col items-center justify-center bg-[radial-gradient(44px_40px_at_912px_10px,#1b1d28,transparent),linear-gradient(#131515,#000)] pt-[22px] pl-[394px] font-['Roboto'] text-[13px] leading-[19px] text-[#c4c1bb]">
        <strong className="font-bold text-[#e6e4e0]">Screenshot (3).png</strong>
        <span>Schmenis · 30. April 2023 um 18:30 Uhr</span>
      </footer>
    </div>
  );
}
